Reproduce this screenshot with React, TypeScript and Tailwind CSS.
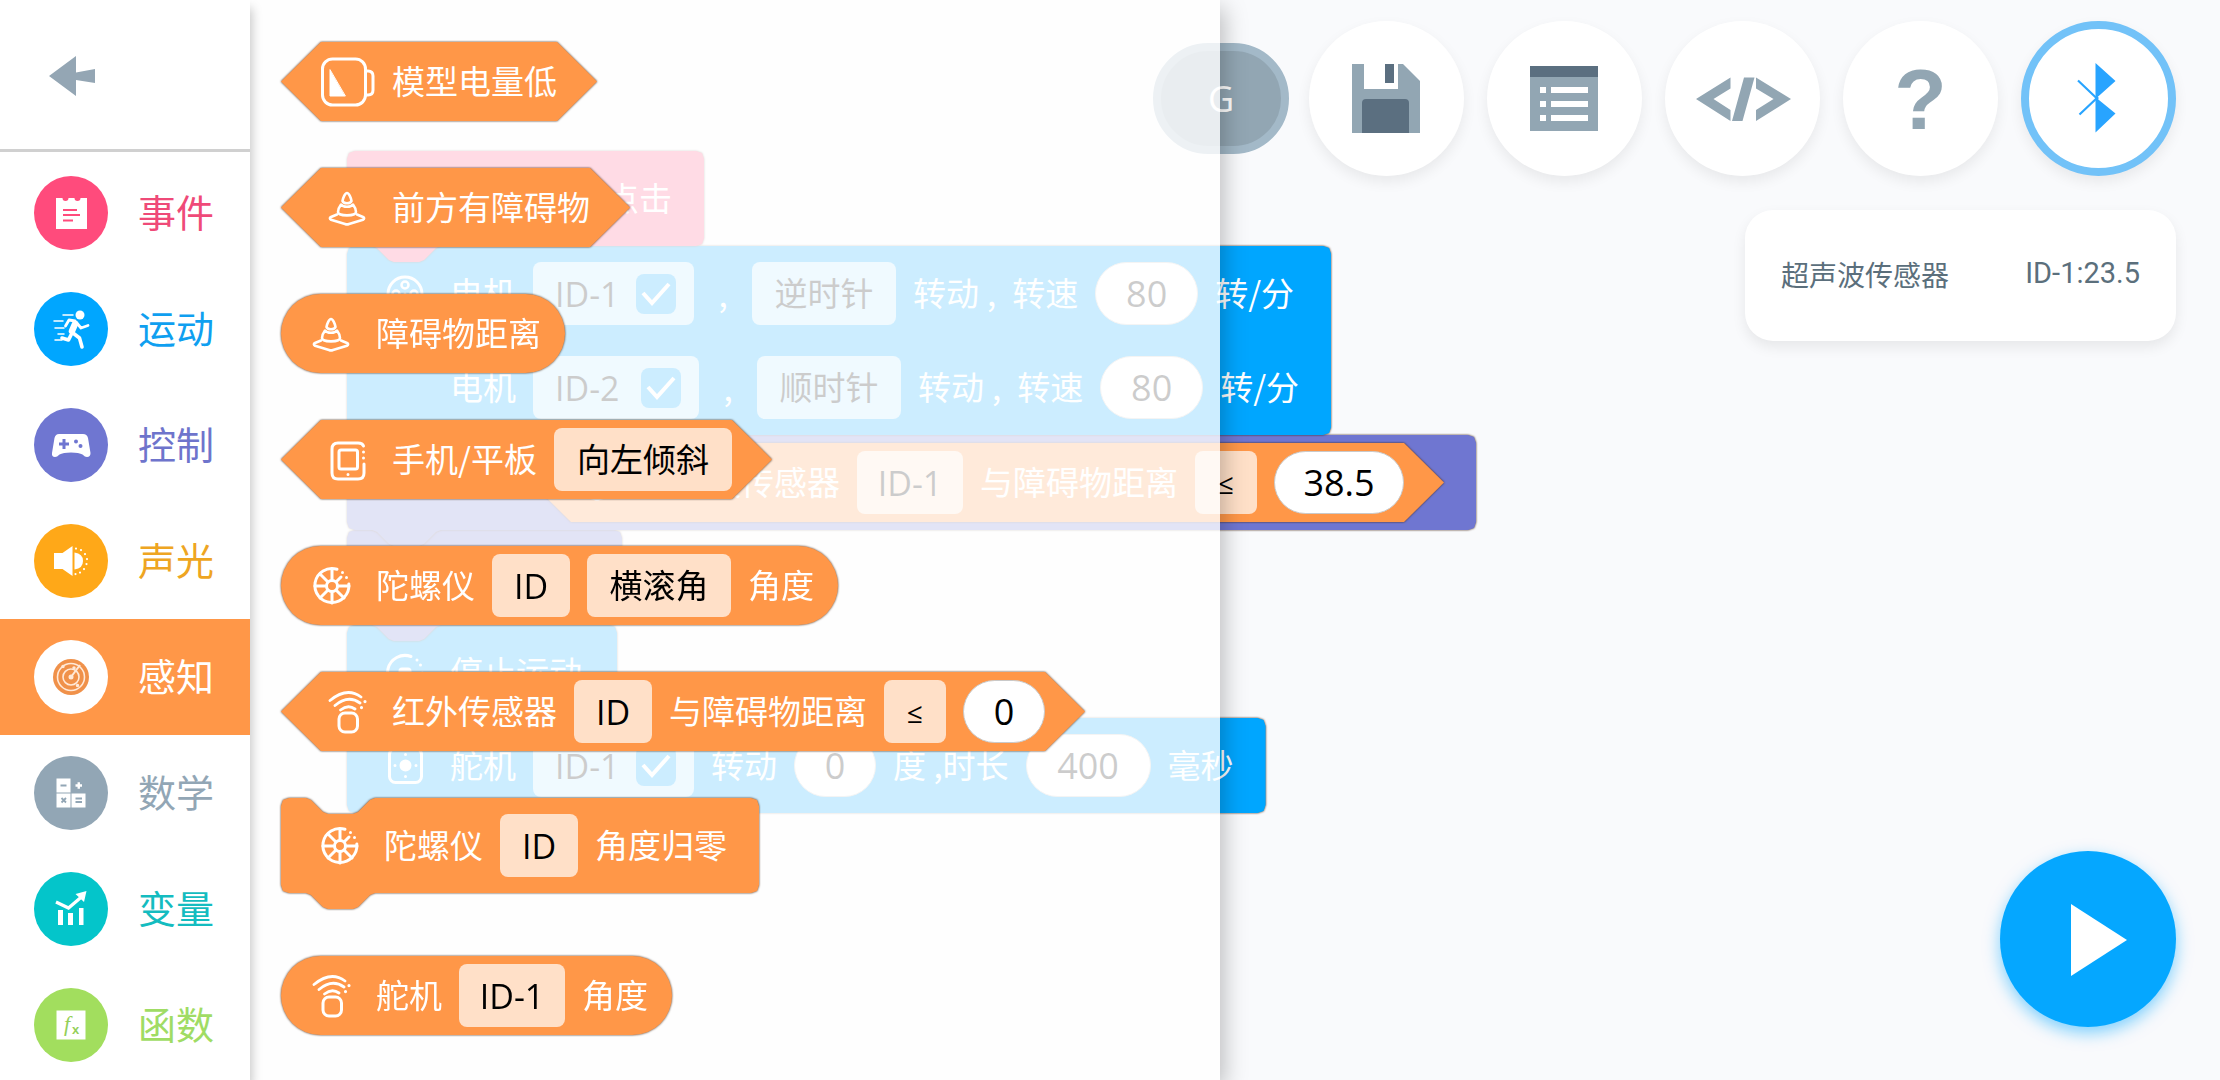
import React from "react";

const CJK = "font-['Noto_Sans_CJK_SC',sans-serif]";
const FIELD_FONT = "font-['Open_Sans','Noto_Sans_CJK_SC',sans-serif]";

const HEX_CLIP =
  "[clip-path:polygon(40px_0,calc(100%_-_40px)_0,100%_50%,calc(100%_-_40px)_100%,40px_100%,0_50%)]";
const STACK_CLIP =
  "[clip-path:polygon(0_8px,2px_2px,8px_0,25px_0,30px_2px,42px_14px,47px_16px,72px_16px,77px_14px,89px_2px,94px_0,calc(100%_-_8px)_0,calc(100%_-_2px)_2px,100%_8px,100%_calc(100%_-_24px),calc(100%_-_2px)_calc(100%_-_18px),calc(100%_-_8px)_calc(100%_-_16px),94px_calc(100%_-_16px),89px_calc(100%_-_14px),77px_calc(100%_-_2px),72px_100%,47px_100%,42px_calc(100%_-_2px),30px_calc(100%_-_14px),25px_calc(100%_-_16px),8px_calc(100%_-_16px),2px_calc(100%_-_18px),0_calc(100%_-_24px))]";
const HAT_CLIP =
  "[clip-path:polygon(0_8px,2px_2px,8px_0,calc(100%_-_8px)_0,calc(100%_-_2px)_2px,100%_8px,100%_calc(100%_-_24px),calc(100%_-_2px)_calc(100%_-_18px),calc(100%_-_8px)_calc(100%_-_16px),94px_calc(100%_-_16px),89px_calc(100%_-_14px),77px_calc(100%_-_2px),72px_100%,47px_100%,42px_calc(100%_-_2px),30px_calc(100%_-_14px),25px_calc(100%_-_16px),8px_calc(100%_-_16px),2px_calc(100%_-_18px),0_calc(100%_-_24px))]";
const OUTLINE = "[filter:drop-shadow(0_0_1px_rgba(70,40,20,0.95))]";

type Kids = { children?: React.ReactNode };

/* ---------- block shapes ---------- */

function HexBlock({ children }: Kids) {
  return (
    <div className="relative w-max h-[79px]">
      <div className={`absolute inset-0 ${OUTLINE}`}>
        <div className={`size-full bg-[#ff9748] ${HEX_CLIP}`} />
      </div>
      <div className="relative flex h-full items-center gap-[17px] px-10">{children}</div>
    </div>
  );
}

function RoundBlock({ children }: Kids) {
  return (
    <div className={`flex h-[79px] w-max items-center gap-[17px] rounded-full bg-[#ff9748] px-6 ${OUTLINE}`}>
      {children}
    </div>
  );
}

function StackBlock({ color, clip = STACK_CLIP, className = "", children }: Kids & { color: string; clip?: string; className?: string }) {
  return (
    <div className={`relative w-max ${className}`}>
      <div className={`absolute inset-x-0 top-0 -bottom-4 ${OUTLINE}`}>
        <div className={`size-full ${color} ${clip}`} />
      </div>
      <div className="relative">{children}</div>
    </div>
  );
}

function Row({ children, className = "" }: Kids & { className?: string }) {
  return <div className={`flex h-[63px] items-center gap-[17px] ${className}`}>{children}</div>;
}

/* ---------- block parts ---------- */

function Label({ children }: Kids) {
  return <span className="whitespace-pre pb-0.5 text-[33px] leading-none text-white">{children}</span>;
}

function Field({ width = "", children }: Kids & { width?: string }) {
  return (
    <button
      type="button"
      aria-haspopup="listbox"
      className={`flex h-[63px] items-center justify-center rounded-lg bg-white/70 text-black ${width} ${FIELD_FONT}`}
    >
      {children}
    </button>
  );
}

function Word({ children }: Kids) {
  return <span className="text-[33px] leading-none">{children}</span>;
}

function Id({ children }: Kids) {
  return <span className="text-[34px] leading-none">{children}</span>;
}

function PortField({ name, width }: { name: string; width: string }) {
  return (
    <div className={`flex h-[63px] items-center justify-between rounded-lg bg-white/70 pr-[18px] pl-[22px] ${width}`}>
      <button type="button" className={`text-[34px] leading-none text-black ${FIELD_FONT}`}>
        {name}
      </button>
      <label className="relative size-10">
        <input type="checkbox" defaultChecked aria-label={name} className="size-10 appearance-none rounded-lg bg-[#00a6ff]" />
        <svg viewBox="0 0 40 40" className="pointer-events-none absolute inset-0 size-10" fill="none" stroke="#fff" strokeWidth="4">
          <path d="M7 19 16 29 33 10" />
        </svg>
      </label>
    </div>
  );
}

function NumberField({ value, width, label }: { value: string; width: string; label: string }) {
  return (
    <input
      type="text"
      inputMode="decimal"
      defaultValue={value}
      aria-label={label}
      className={`h-[63px] rounded-full border border-[#c9c9c9] bg-white text-center text-[36px] text-black ${width} ${FIELD_FONT}`}
    />
  );
}

/* ---------- block icons, drawn on a 54px tile ---------- */

function Tile({ children }: Kids) {
  return (
    <svg viewBox="0 0 54 54" className="size-[54px] shrink-0" fill="none" stroke="#fff" strokeWidth="3" strokeLinecap="round" strokeLinejoin="round" aria-hidden="true">
      {children}
    </svg>
  );
}

const BatteryIcon = () => (
  <Tile>
    <rect x="1.5" y="4" width="43" height="46" rx="10" />
    <path d="M45 16h2q5 0 5 5v14q0 5-5 5h-2" />
    <path d="M9 15v26h15z" fill="#fff" strokeWidth="1" />
  </Tile>
);

const ConeIcon = () => (
  <Tile>
    <g strokeWidth="2.6">
      <path d="M26 12c-2 0-4 5-4.5 8 1 3 8 3 9 0C30 17 28 12 26 12z" />
      <path d="M20 23.500c-1.500 2-3 5-3 7.500 0 4.500 18 4.500 18 0 0-2.500-1.500-5.500-3-7.500-2 3-10 3-12 0z" />
      <path d="m16 33.500-6 2.500c-1.500.7-1.500 2 0 2.700L24 43q2 .8 4 0l14-4.300c1.500-.7 1.500-2 0-2.700l-6-2.500" />
    </g>
  </Tile>
);

const TabletIcon = () => (
  <Tile>
    <path d="M43 31v9q0 6-6 6H17q-6 0-6-6V16q0-6 6-6h20q4.500 0 5.500 3" />
    <rect x="18" y="17" width="18.500" height="19" rx="2" />
    <path d="M27 41.500v.1M42.500 19v.1M42.500 25v.1" />
  </Tile>
);

const WheelIcon = () => (
  <Tile>
    <path d="M32 10.300A17 17 0 1 0 43.800 25" />
    <circle cx="27" cy="27" r="5.500" />
    <path d="M27 10v11M27 33v11M10 27h11M33 27h11M15 15l8 8M31 31l8 8M15 39l8-8M31.500 22.500l4.500-4.500" />
    <path d="M37.500 13.500v.1M41.500 18.500v.1" />
  </Tile>
);

const BeamIcon = () => (
  <Tile>
    <rect x="18" y="28" width="18.500" height="19" rx="6" />
    <path d="M19.500 25q7.500-6 14.500-1M14 20.500q13-11 25-2.500M9 15.500q17-14 31-3.500" strokeWidth="2.800" />
    <path d="M40.500 22.500v.1M44 16.500v.1" strokeWidth="3.200" />
  </Tile>
);

const MotorIcon = () => (
  <Tile>
    <circle cx="26" cy="27" r="17" />
    <circle cx="26" cy="18" r="3.500" strokeWidth="2.500" />
    <circle cx="17" cy="27" r="3.500" strokeWidth="2.500" />
    <circle cx="35" cy="27" r="3.500" strokeWidth="2.500" />
    <circle cx="26" cy="36" r="3.500" strokeWidth="2.500" />
    <path d="M26 27v.1" />
  </Tile>
);

const StopIcon = () => (
  <Tile>
    <path d="M32 10.500A17.500 17.500 0 1 0 43.500 27" />
    <rect x="21" y="23" width="10" height="10" rx="2" fill="#fff" />
    <path d="M38 14v.1M41.500 19v.1" />
  </Tile>
);

const ServoIcon = () => (
  <Tile>
    <rect x="10.500" y="9.500" width="32" height="34" rx="6" />
    <circle cx="26.500" cy="26.500" r="4.500" fill="#fff" />
    <path d="M26.500 15.500v.1M26.500 37.500v.1M16 26.500v.1M37 26.500v.1" />
  </Tile>
);

/* ---------- category icons, drawn on the 74px disc ---------- */

const categories = [
  {
    name: "事件", text: "text-[#ef4a78]", disc: "bg-[#ff4b7c]",
    icon: (
      <>
        <path fill="#fff" d="M22 22h6.500a3 3 0 0 0 6 0h6a3 3 0 0 0 6 0H53v31H22z" />
        <path stroke="#ff4b7c" strokeWidth="2.200" d="M29 34h14M29 39h17M29 44.500h10" />
      </>
    ),
  },
  {
    name: "运动", text: "text-[#0f9ff0]", disc: "bg-[#00a6ff]",
    icon: (
      <>
        <circle cx="46" cy="23" r="4.500" fill="#fff" />
        <g fill="none" stroke="#fff" strokeLinecap="round" strokeLinejoin="round">
          <path strokeWidth="2.800" d="m41 29-6-1-3.500 6M42 30l5 6 7-2.500" />
          <path strokeWidth="6.500" d="m41 32-3 7" />
          <path strokeWidth="3.600" d="M39 41l6.500 5L48 55M38 41l-3.500 7-6.500-2" />
          <path strokeWidth="1.500" d="M29 23h10M20 29h9M21 36h9M24 42h6M21 48h7" />
        </g>
      </>
    ),
  },
  {
    name: "控制", text: "text-[#6e74cc]", disc: "bg-[#6f76d1]",
    icon: (
      <>
        <path fill="#fff" d="M25 26h24q4 0 5 4l2.500 15q0 4-3.500 4-2 0-4.500-2.500Q45 44.500 37 44.500T25.500 46.500Q23 49 21 49q-3.500 0-3-4l2.500-15q1-4 4.500-4z" />
        <path stroke="#6f76d1" strokeWidth="3" d="M25 36h10M30 31v10" />
        <circle cx="42" cy="33.500" r="2" fill="#6f76d1" />
        <circle cx="46.500" cy="38" r="2" fill="#6f76d1" />
      </>
    ),
  },
  {
    name: "声光", text: "text-[#eea522]", disc: "bg-[#ffa818]",
    icon: (
      <>
        <path fill="#fff" d="M20 29h8.500l10-7v30l-10-7H20zM40.500 28.500q8.500 1 8.500 8.500t-8.500 8.500z" />
        <path stroke="#fff" strokeWidth="2.200" strokeLinecap="round" d="M42 24.500v.1M47 26v.1M51 30v.1M53 35v.1M52.500 40v.1M50 45v.1M46 48.500v.1M41.500 50v.1" />
      </>
    ),
  },
  {
    name: "感知", text: "text-white", disc: "bg-white", active: true,
    icon: (
      <>
        <circle cx="37" cy="37" r="18" fill="#f0914a" />
        <g fill="none" stroke="#ffe9d8" strokeWidth="1.600">
          <circle cx="37" cy="37" r="13.500" />
          <circle cx="37" cy="37" r="8" />
          <path d="m37 37 9-12" strokeWidth="2" />
        </g>
        <circle cx="37" cy="37" r="2.500" fill="#ffe9d8" />
        <path stroke="#ffe9d8" strokeWidth="3.500" strokeLinecap="round" d="M40 28v.1M43.500 45.500v.1M29 26.500v.1" />
      </>
    ),
  },
  {
    name: "数学", text: "text-[#92a6b5]", disc: "bg-[#92a6b5]",
    icon: (
      <>
        <path fill="#fff" d="M22.500 22.500h14v14h-14zM22.500 37.500h14v14h-14zM37.500 37.500h14v14h-14z" />
        <path stroke="#fff" strokeWidth="2.400" d="M41.500 29.500h6.500M44.750 26.250v6.500" />
        <path stroke="#92a6b5" strokeWidth="1.800" d="M26.500 29.500h6M27.500 42l4.500 4.500M32 42l-4.500 4.500M41.500 42.500h6.500M41.500 46h6.500" />
      </>
    ),
  },
  {
    name: "变量", text: "text-[#14bcc0]", disc: "bg-[#04c5ca]",
    icon: (
      <>
        <path fill="#fff" d="M24 38h5v15h-5zM34 41h5v12h-5zM45 36h4.500v17H45z" />
        <path fill="none" stroke="#fff" strokeWidth="3.200" d="m22 30 12.500 6L48 24.500" />
        <path fill="#fff" d="m52.500 19-2.500 11-8.500-8z" />
      </>
    ),
  },
  {
    name: "函数", text: "text-[#a0dc64]", disc: "bg-[#a2de5e]",
    icon: (
      <>
        <path fill="#fff" d="M22.500 22.500h29v29h-29z" />
        <text x="30" y="43" fontFamily="Liberation Serif" fontStyle="italic" fontSize="22" fill="#94cf58">f</text>
        <text x="38" y="46" fontFamily="Liberation Sans" fontSize="13" fontWeight="bold" fill="#94cf58">x</text>
      </>
    ),
  },
];

function Sidebar() {
  return (
    <nav className="relative z-20 flex w-[250px] shrink-0 flex-col bg-white shadow-[2px_8px_10px_rgba(0,0,0,0.22)]">
      <div className="flex h-[152px] shrink-0 items-center border-b-[3px] border-[#d0d0d0] pt-0.5 pl-[49px]">
        <button type="button" aria-label="返回">
          <svg viewBox="0 0 46 40" className="h-10 w-[46px]">
            <path fill="#94a6b4" d="M0 20 27 0v16.500L46 13v14l-19-3v16z" />
          </svg>
        </button>
      </div>
      <div className="flex flex-col pt-[3px]">
        {categories.map((c) => (
          <button
            key={c.name}
            type="button"
            className={`flex h-[116px] shrink-0 items-center gap-[30px] pl-[34px] ${c.text} ${c.active ? "bg-[#ff9748]" : ""}`}
          >
            <span className={`size-[74px] rounded-full ${c.disc}`}>
              <svg viewBox="0 0 74 74" className="size-[74px]" aria-hidden="true">{c.icon}</svg>
            </span>
            <span className="pb-1 text-[38px] leading-none">{c.name}</span>
          </button>
        ))}
      </div>
    </nav>
  );
}

/* ---------- block palette ---------- */

function Palette() {
  return (
    <section className="absolute inset-y-0 left-0 z-10 flex w-[970px] flex-col gap-[47px] bg-white/80 pt-[42px] pl-[31px] shadow-[4px_8px_22px_rgba(0,0,0,0.25)]">
      <HexBlock>
        <BatteryIcon />
        <Label>模型电量低</Label>
      </HexBlock>
      <HexBlock>
        <ConeIcon />
        <Label>前方有障碍物</Label>
      </HexBlock>
      <RoundBlock>
        <ConeIcon />
        <Label>障碍物距离</Label>
      </RoundBlock>
      <HexBlock>
        <TabletIcon />
        <Label>手机/平板</Label>
        <Field width="w-[178px]"><Word>向左倾斜</Word></Field>
      </HexBlock>
      <RoundBlock>
        <WheelIcon />
        <Label>陀螺仪</Label>
        <Field width="w-[78px]"><Id>ID</Id></Field>
        <Field width="w-[144px]"><Word>横滚角</Word></Field>
        <Label>角度</Label>
      </RoundBlock>
      <HexBlock>
        <BeamIcon />
        <Label>红外传感器</Label>
        <Field width="w-[78px]"><Id>ID</Id></Field>
        <Label>与障碍物距离</Label>
        <Field width="w-[62px]"><span className="text-[28px]">≤</span></Field>
        <NumberField value="0" width="w-[82px]" label="红外距离" />
      </HexBlock>
      <StackBlock color="bg-[#ff9748]" className="mb-4">
        <Row className="my-4 px-8">
          <WheelIcon />
          <Label>陀螺仪</Label>
          <Field width="w-[78px]"><Id>ID</Id></Field>
          <Label>角度归零</Label>
        </Row>
      </StackBlock>
      <RoundBlock>
        <BeamIcon />
        <Label>舵机</Label>
        <Field width="w-[106px]"><Id>ID-1</Id></Field>
        <Label>角度</Label>
      </RoundBlock>
    </section>
  );
}

/* ---------- program on the canvas ---------- */

function MotorRow({ port, width, direction, icon }: { port: string; width: string; direction: string; icon?: React.ReactNode }) {
  return (
    <Row>
      {icon ?? <span className="w-[54px]" />}
      <Label>电机</Label>
      <PortField name={port} width={width} />
      <span className="w-6 text-center text-[33px] leading-none text-white">,</span>
      <Field width="w-[144px]"><Word>{direction}</Word></Field>
      <Label>转动<span className="pr-4 pl-2">,</span>转速</Label>
      <NumberField value="80" width="w-[103px]" label={`${port} 转速`} />
      <Label>转/分</Label>
    </Row>
  );
}

function Program() {
  return (
    <div className="absolute top-[151px] left-[97px] flex w-max flex-col">
      <StackBlock color="bg-[#ff4b7c]" clip={HAT_CLIP} className="z-[5]">
        <Row className="my-4 w-[357px] justify-end px-8">
          <Label>点击</Label>
        </Row>
      </StackBlock>
      <StackBlock color="bg-[#00a6ff]" className="z-[4]">
        <div className="flex flex-col gap-[31px] px-8 py-4">
          <MotorRow port="ID-1" width="w-[161px]" direction="逆时针" icon={<MotorIcon />} />
          <MotorRow port="ID-2" width="w-[166px]" direction="顺时针" />
        </div>
      </StackBlock>
      <StackBlock color="bg-[#6f76d1]" className="z-[3]">
        <div className="py-2 pr-8 pl-[184px]">
          <HexBlock>
            <ConeIcon />
            <Label>超声波传感器</Label>
            <Field width="w-[106px]"><Id>ID-1</Id></Field>
            <Label>与障碍物距离</Label>
            <Field width="w-[62px]"><span className="text-[28px]">≤</span></Field>
            <NumberField value="38.5" width="w-[130px]" label="超声波距离" />
          </HexBlock>
        </div>
      </StackBlock>
      <StackBlock color="bg-[#6f76d1]" className="z-[2]">
        <div className="h-[95px] w-[275px]" />
      </StackBlock>
      <StackBlock color="bg-[#00a6ff]" className="z-[1]">
        <Row className="mt-4 mb-[14px] pr-[35px] pl-8">
          <StopIcon />
          <Label>停止运动</Label>
        </Row>
      </StackBlock>
      <StackBlock color="bg-[#00a6ff]">
        <Row className="my-4 px-8">
          <ServoIcon />
          <Label>舵机</Label>
          <PortField name="ID-1" width="w-[161px]" />
          <Label>转动</Label>
          <NumberField value="0" width="w-[82px]" label="舵机角度" />
          <Label>度 ,时长</Label>
          <NumberField value="400" width="w-[125px]" label="舵机时长" />
          <Label>毫秒</Label>
        </Row>
      </StackBlock>
    </div>
  );
}

/* ---------- toolbar ---------- */

function ToolButton({ label, className = "", children }: Kids & { label: string; className?: string }) {
  return (
    <button
      type="button"
      aria-label={label}
      className={`flex size-[155px] items-center justify-center rounded-full bg-white shadow-[0_6px_14px_rgba(0,0,0,0.07)] ${className}`}
    >
      {children}
    </button>
  );
}

function Drawing({ children }: Kids) {
  return (
    <svg viewBox="0 0 155 155" className="size-[155px] shrink-0" aria-hidden="true">
      {children}
    </svg>
  );
}

function Toolbar() {
  return (
    <header className="flex items-center justify-end gap-5">
      <button
        type="button"
        className={`flex h-[111px] w-[136px] items-center justify-center rounded-full border-8 border-[#a3b9c8] bg-[#92a6b3] text-[36px] text-white ${FIELD_FONT}`}
      >
        G
      </button>
      <div className="flex gap-[23px]">
        <ToolButton label="保存">
          <Drawing>
            <path fill="#92a6b3" d="M43 43h51l17 17v52H43z" />
            <path fill="#fff" d="M55 43h34v25H55z" />
            <path fill="#5b6f80" d="M76 43h9v19h-9zM53 112V82q0-4 4-4h39q4 0 4 4v30z" />
          </Drawing>
        </ToolButton>
        <ToolButton label="列表">
          <Drawing>
            <path fill="#92a6b3" d="M43 45h68v65H43z" />
            <path fill="#5b6f80" d="M43 45h68v11H43z" />
            <path fill="#fff" d="M53 66h6v6h-6zM64 66h37v6H64zM53 80h6v6h-6zM64 80h37v6H64zM53 94h6v6h-6zM64 94h37v6H64z" />
          </Drawing>
        </ToolButton>
        <ToolButton label="代码">
          <Drawing>
            <path fill="#92a6b3" d="M31 78 65.500 56.500v11L48.500 78l17 11v11zM79 56.500h10.500l-12 43.500H67zM91 56.500 126 78 91 100V89l17.500-11L91 67.500z" />
          </Drawing>
        </ToolButton>
        <ToolButton label="帮助">
          <span className="font-['Liberation_Sans',sans-serif] text-[86px] leading-none font-bold text-[#92a6b3]">?</span>
        </ToolButton>
        <ToolButton label="蓝牙" className="border-8 border-[#72c2f8]">
          <Drawing>
            <path fill="#28a4ff" d="M74.500 42 94.500 60 75.500 77l19 15.500-20 19z" />
            <path stroke="#28a4ff" strokeWidth="2.200" d="m57 59.500 20 19M58.500 93.500 77 76" />
          </Drawing>
        </ToolButton>
      </div>
    </header>
  );
}

export default function App() {
  return (
    <div className={`flex h-screen overflow-hidden bg-[#f9fafc] ${CJK}`}>
      <Sidebar />
      <main className="relative flex min-w-0 flex-1 flex-col items-end overflow-hidden pt-[21px] pr-11 pb-[53px]">
        <Toolbar />
        <Program />
        <aside className="mt-[34px] flex h-[131px] w-[431px] items-center justify-between rounded-[28px] bg-white px-9 pb-1 text-[28px] text-[#5b6f7c] shadow-[0_6px_14px_rgba(0,0,0,0.08)]">
          <span>超声波传感器</span>
          <span className="font-[Roboto,sans-serif] text-[29px]">ID-1:23.5</span>
        </aside>
        <button
          type="button"
          aria-label="运行"
          className="mt-auto flex size-[176px] items-center justify-center rounded-full bg-[#05a7ff] shadow-[0_6px_16px_rgba(5,167,255,0.5)]"
        >
          <svg viewBox="0 0 176 176" className="size-[176px]" aria-hidden="true">
            <path fill="#fff" d="M71 53v72l56-36z" />
          </svg>
        </button>
        <Palette />
      </main>
    </div>
  );
}
